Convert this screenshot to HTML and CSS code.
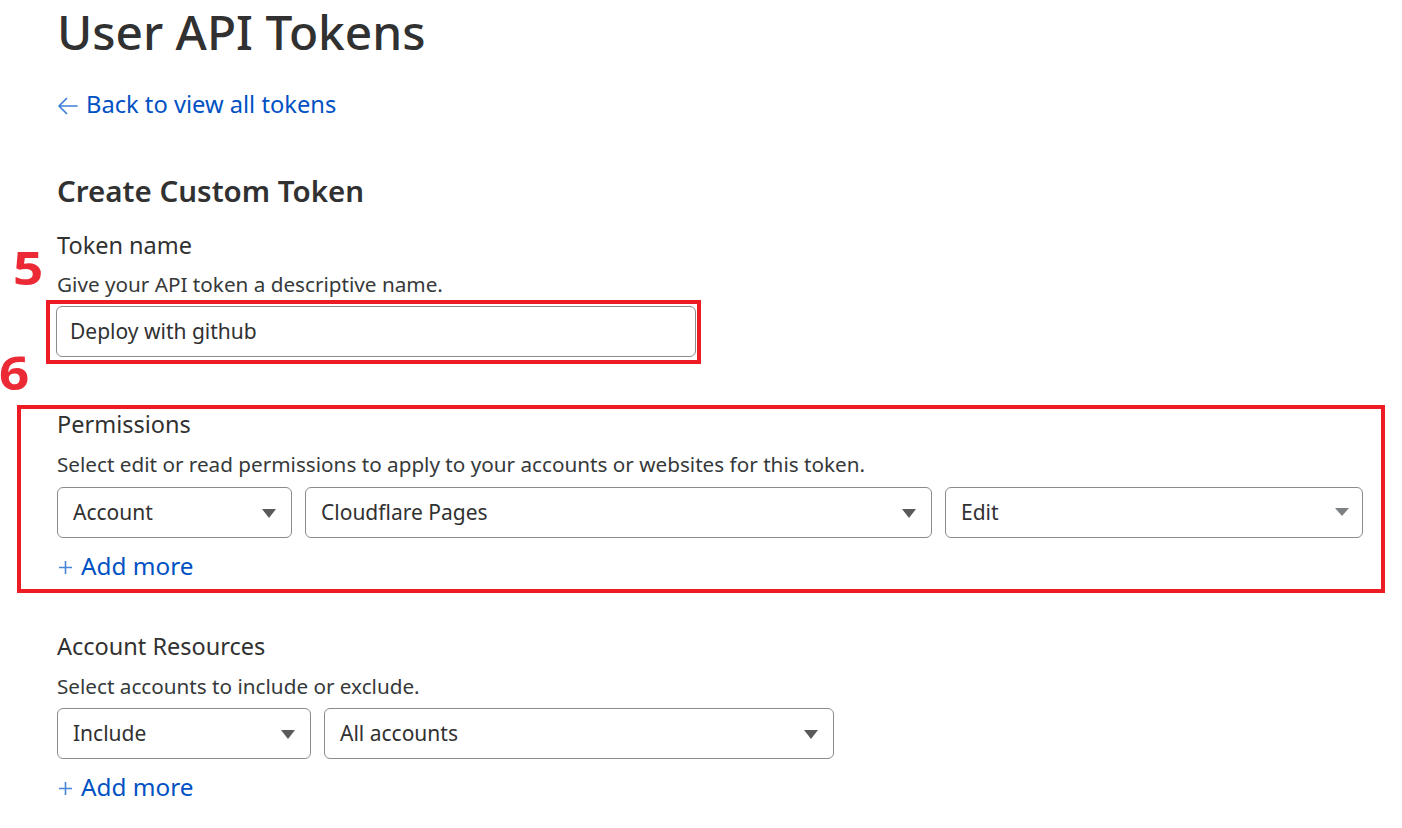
FILE: index.html
```html
<!DOCTYPE html>
<html lang="en">
<head>
<meta charset="utf-8">
<title>User API Tokens</title>
<link rel="stylesheet" href="styles.css">
</head>
<body>
<main class="page">
  <h1 class="title">User API Tokens</h1>
  <a class="back" href="#"><svg class="arrow" width="21" height="18" viewBox="0 0 21 18" aria-hidden="true"><path d="M2 9 H20 M9.5 1.5 L2 9 L9.5 16.5" fill="none" stroke="#3d7fd6" stroke-width="1.7" stroke-linecap="round" stroke-linejoin="round"/></svg>Back to view all tokens</a>
  <h2 class="subtitle">Create Custom Token</h2>

  <section class="field token-field">
    <span class="step step-5">5</span>
    <div class="label">Token name</div>
    <div class="desc">Give your API token a descriptive name.</div>
    <div class="mark mark-input">
      <div class="input">Deploy with github</div>
    </div>
  </section>

  <section class="mark mark-perms">
    <span class="step step-6">6</span>
    <div class="label">Permissions</div>
    <div class="desc">Select edit or read permissions to apply to your accounts or websites for this token.</div>
    <div class="row">
      <div class="select w-account">Account<span class="caret"></span></div>
      <div class="select w-pages">Cloudflare Pages<span class="caret"></span></div>
      <div class="select w-edit">Edit<span class="caret light"></span></div>
    </div>
    <a class="add" href="#"><svg class="plus" width="15" height="15" viewBox="0 0 15 15" aria-hidden="true"><path d="M7.5 1 V14 M1 7.5 H14" fill="none" stroke="#4a86d8" stroke-width="1.6"/></svg>Add more</a>
  </section>

  <section class="field resources">
    <div class="label">Account Resources</div>
    <div class="desc">Select accounts to include or exclude.</div>
    <div class="row">
      <div class="select w-include">Include<span class="caret"></span></div>
      <div class="select w-all">All accounts<span class="caret"></span></div>
    </div>
    <a class="add" href="#"><svg class="plus" width="15" height="15" viewBox="0 0 15 15" aria-hidden="true"><path d="M7.5 1 V14 M1 7.5 H14" fill="none" stroke="#4a86d8" stroke-width="1.6"/></svg>Add more</a>
  </section>
</main>
</body>
</html>
```
FILE: styles.css
```css
* { box-sizing: border-box; }
html, body { margin: 0; padding: 0; background: #fff; }
body {
  font-family: "Noto Sans", "Open Sans", sans-serif;
  color: #36393a;
  width: 1402px;
  overflow: hidden;
}
.page {
  padding: 0 0 0 57px;
  width: 1361px;
  display: flex;
  flex-direction: column;
  align-items: flex-start;
}
.title {
  margin: 0;
  font-size: 47.8px;
  font-weight: 500;
  line-height: 64px;
  color: #313131;
  letter-spacing: 0;
}
.back {
  margin-top: 25px;
  font-size: 23.7px;
  line-height: 30px;
  color: #0051c3;
  text-decoration: none;
  display: flex;
  align-items: center;
}
.back .arrow { margin: 4px 8px 0 0; }
.subtitle {
  margin: 52px 0 0;
  font-size: 29.5px;
  font-weight: 600;
  line-height: 40px;
  color: #313131;
}
.field { position: relative; width: 100%; }
.token-field { margin-top: 19px; }
.label {
  font-size: 23.5px;
  line-height: 30px;
  color: #313131;
}
.desc {
  font-size: 20.7px;
  line-height: 28px;
  margin-top: 10px;
  color: #36393a;
}
.mark {
  border: 4px solid #ed1c24;
}
.mark-input {
  margin: 2px 0 0 -11px;
  width: 655px;
  padding: 2px 1px 3px 6px;
}
.input {
  height: 51px;
  border: 1px solid #8b8b8b;
  border-radius: 6px;
  font-size: 21px;
  line-height: 49px;
  padding: 0 13px;
  color: #313131;
}
.step {
  position: absolute;
  color: #ec2a36;
  font-family: "Open Sans", "Noto Sans", sans-serif;
  font-weight: 700;
  font-size: 46px;
  line-height: 1;
  transform: scaleX(1.15);
  transform-origin: left top;
}
.step-5 { left: -44px; top: 14px; }
.step-6 { left: -22px; top: -60px; }
.mark-perms {
  position: relative;
  margin: 41px 0 0 -40px;
  width: 1368px;
  padding: 0 0 7px 36px;
}
.mark-perms .desc { margin-top: 11px; }
.row {
  display: flex;
  gap: 13px;
  margin-top: 9px;
}
.select {
  position: relative;
  height: 51px;
  border: 1px solid #8b8b8b;
  border-radius: 6px;
  font-size: 21px;
  line-height: 49px;
  padding: 0 15px;
  color: #313131;
}
.caret {
  position: absolute;
  right: 15px;
  top: 21px;
  width: 0;
  height: 0;
  border-left: 7px solid transparent;
  border-right: 7px solid transparent;
  border-top: 9px solid #5a5a5a;
}
.caret.light { border-top-color: #7d8083; border-top-width: 8px; top: 20px; right: 13px; }
.w-account { width: 235px; }
.w-pages { width: 627px; }
.w-edit { width: 418px; }
.w-include { width: 254px; }
.w-all { width: 510px; }
.add {
  display: flex;
  align-items: center;
  margin-top: 12px;
  font-size: 24.3px;
  line-height: 32px;
  color: #0051c3;
  text-decoration: none;
}
.add .plus { margin: 2px 8px 0 1px; }
.resources { margin-top: 38px; }
.resources .desc { margin-top: 11px; }
.resources .row { margin-top: 8px; }
```
